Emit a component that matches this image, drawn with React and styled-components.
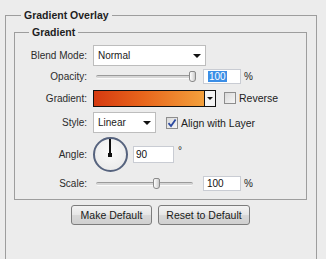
import React from 'react'
import styled, { createGlobalStyle } from 'styled-components'

const Global = createGlobalStyle`
  html, body { margin: 0; padding: 0; }
  body {
    background: #ececec;
    font-family: "Liberation Sans", Arial, sans-serif;
    font-size: 10px;
    color: #2b2b2b;
    overflow: hidden;
    width: 326px;
    height: 259px;
  }
`

const Page = styled.div`
  padding: 8px 9px 0 5px;
`

const Group = styled.fieldset`
  box-sizing: border-box;
  margin: ${p => (p.$inner ? '3px 0 0 0' : '0')};
  padding: ${p => (p.$inner ? '0 0 7px 0' : '0 9px 0 8px')};
  min-width: 0;
  height: ${p => (p.$inner ? 'auto' : '251px')};
  border: 1px solid #9d9d9d;
  border-bottom: ${p => (p.$inner ? '1px solid #9d9d9d' : 'none')};
  border-radius: 0;
`

const Legend = styled.legend`
  margin-left: ${p => (p.$inner ? '14px' : '7px')};
  padding: 0 3px;
  font-weight: bold;
  font-size: 10.5px;
  line-height: 14px;
  color: #1e1e1e;
`

const Row = styled.div`
  display: flex;
  align-items: center;
  height: ${p => p.$h}px;
  margin-top: ${p => p.$mt}px;
`

const Label = styled.div`
  width: 72px;
  margin-right: 5px;
  text-align: right;
  flex-shrink: 0;
`

const Select = styled.div`
  box-sizing: border-box;
  width: ${p => p.$w}px;
  height: 21px;
  margin-left: 1px;
  background: #fff;
  border: 1px solid #bdbdbd;
  display: flex;
  align-items: center;
  padding-left: 4px;
  color: #1a1a1a;
`

const Arrow = styled.span`
  margin-left: ${p => (p.$center ? '0' : 'auto')};
  margin-right: ${p => (p.$center ? 0 : 4)}px;
  width: 0;
  height: 0;
  border-left: ${p => p.$s || 4}px solid transparent;
  border-right: ${p => p.$s || 4}px solid transparent;
  border-top: ${p => p.$s || 4}px solid #111;
`

const Slider = styled.div`
  position: relative;
  width: 106px;
  height: 100%;
  display: flex;
  align-items: center;
`

const Track = styled.div`
  flex: 1;
  margin: 0 5px 0 4px;
  height: 2px;
  border-top: 1px solid #9a9a9a;
  border-bottom: 1px solid #fafafa;
  background: #d6d6d6;
  border-radius: 2px;
`

const Thumb = styled.div`
  position: absolute;
  top: 3px;
  width: 7px;
  height: 11px;
  margin-left: -4px;
  box-sizing: border-box;
  border: 1px solid #8a8a8a;
  border-radius: 2px 2px 3px 3px;
  background: linear-gradient(90deg, #fdfdfd, #e2e2e2 60%, #c9c9c9);
`

const Field = styled.div`
  box-sizing: border-box;
  width: ${p => p.$w}px;
  height: ${p => p.$h}px;
  margin-left: ${p => p.$ml}px;
  background: #fff;
  border: 1px solid #c9ccd3;
  padding-left: ${p => p.$pl}px;
  display: flex;
  align-items: center;
  color: #111;
`

const Selected = styled.span`
  background: #3b8ee6;
  color: #fff;
  padding: 0 1px;
  line-height: 11px;
`

const Unit = styled.span`
  margin-left: ${p => p.$ml}px;
  align-self: ${p => (p.$top ? 'flex-start' : 'center')};
  margin-top: ${p => (p.$top ? '9px' : '0')};
  color: #222;
`

const GradientBox = styled.div`
  box-sizing: border-box;
  width: 123px;
  height: 17px;
  margin-left: 1px;
  border: 1px solid #111;
  display: flex;
`

const Preview = styled.div`
  flex: 1;
  background: linear-gradient(90deg, #d63a10, #e8661c 45%, #f3a03c);
`

const GradButton = styled.div`
  width: 10px;
  border-left: 1px solid #111;
  background: #f4f4f4;
  display: flex;
  align-items: center;
  justify-content: center;
`

const Check = styled.div`
  box-sizing: border-box;
  width: 12px;
  height: 12px;
  margin-left: ${p => p.$ml}px;
  border: 1px solid #8d8d8d;
  background: linear-gradient(135deg, #d9d9d9, #f6f6f6);
  display: flex;
  align-items: center;
  justify-content: center;
`

const CheckText = styled.span`
  margin-left: 3px;
  font-size: 10.5px;
  color: #222;
`

const Dial = styled.div`
  position: relative;
  box-sizing: border-box;
  width: 35px;
  height: 35px;
  margin-left: 1px;
  border-radius: 50%;
  border: 2px solid #56637e;
  background: radial-gradient(circle at 50% 40%, #fbfbfb, #e6e6e6);
`

const Needle = styled.div`
  position: absolute;
  left: 14px;
  top: 0;
  width: 2px;
  height: 16px;
  background: #111;
  &::after {
    content: '';
    position: absolute;
    left: -1px;
    bottom: -2px;
    width: 4px;
    height: 4px;
    background: #111;
  }
`

const Buttons = styled.div`
  display: flex;
  justify-content: center;
  gap: 6px;
  margin-top: 5px;
`

const Button = styled.div`
  box-sizing: border-box;
  width: ${p => p.$w}px;
  height: 20px;
  border: 1px solid #7c7c7c;
  border-radius: 3px;
  background: linear-gradient(#f3f3f3, #e6e6e6 50%, #d8d8d8 51%, #d0d0d0);
  display: flex;
  align-items: center;
  justify-content: center;
  font-size: 10.5px;
  color: #1a1a1a;
`

const SliderControl = ({ value }) => (
  <Slider>
    <Track />
    <Thumb style={{ left: `${4 + (value / 100) * 97}px` }} />
  </Slider>
)

const App = () => {
  return (
    <Page>
      <Global />
      <Group>
        <Legend>Gradient Overlay</Legend>
        <Group $inner>
          <Legend $inner>Gradient</Legend>
          <Row $h={21} $mt={6}>
            <Label>Blend Mode:</Label>
            <Select $w={113}>
              Normal
              <Arrow />
            </Select>
          </Row>
          <Row $h={17} $mt={2}>
            <Label>Opacity:</Label>
            <SliderControl value={100} />
            <Field $w={38} $h={15} $ml={5} $pl={4}>
              <Selected>100</Selected>
            </Field>
            <Unit $ml={3}>%</Unit>
          </Row>
          <Row $h={18} $mt={4}>
            <Label>Gradient:</Label>
            <GradientBox>
              <Preview />
              <GradButton>
                <Arrow $s={3} $center />
              </GradButton>
            </GradientBox>
            <Check $ml={8} />
            <CheckText>Reverse</CheckText>
          </Row>
          <Row $h={21} $mt={5}>
            <Label>Style:</Label>
            <Select $w={63}>
              Linear
              <Arrow />
            </Select>
            <Check $ml={10}>
              <svg width="10" height="10" viewBox="0 0 10 10">
                <path d="M1.5 5.2 L4 8 L8.6 1.4" fill="none" stroke="#2c4aa0" strokeWidth="1.8" />
              </svg>
            </Check>
            <CheckText>Align with Layer</CheckText>
          </Row>
          <Row $h={36} $mt={3}>
            <Label>Angle:</Label>
            <Dial>
              <Needle />
            </Dial>
            <Field $w={41} $h={17} $ml={5} $pl={2}>
              90
            </Field>
            <Unit $ml={4} $top>°</Unit>
          </Row>
          <Row $h={17} $mt={3}>
            <Label>Scale:</Label>
            <SliderControl value={63} />
            <Field $w={38} $h={15} $ml={5} $pl={3}>
              100
            </Field>
            <Unit $ml={3}>%</Unit>
          </Row>
        </Group>
        <Buttons>
          <Button $w={81}>Make Default</Button>
          <Button $w={92}>Reset to Default</Button>
        </Buttons>
      </Group>
    </Page>
  )
}

export default App
